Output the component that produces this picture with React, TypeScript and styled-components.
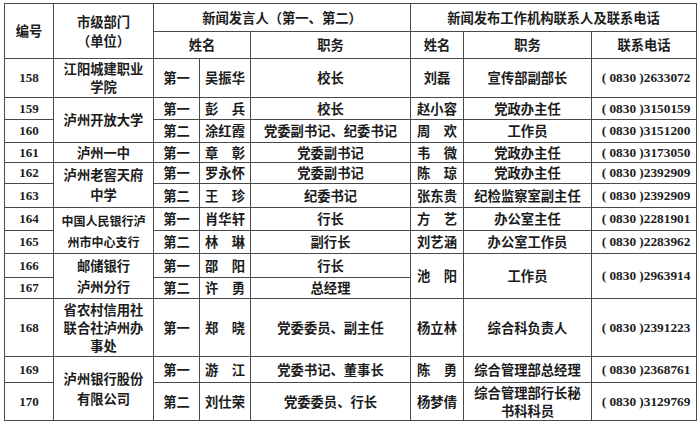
import React from 'react';
import styled, { createGlobalStyle } from 'styled-components';

const Global = createGlobalStyle`
  html, body { margin: 0; padding: 0; background: #fff; }
  body { width: 700px; height: 424px; overflow: hidden; }
`;

const Page = styled.div`
  padding: 3px 0 0 4px;
`;

const Table = styled.table`
  border-collapse: collapse;
  table-layout: fixed;
  width: 692px;
  font-family: "Noto Sans CJK SC", "Noto Sans", sans-serif;
  font-size: 13.3px;
  font-weight: 700;
  color: #1c1c1c;
`;

const Row = styled.tr<{ $h: number }>`
  height: ${(p) => p.$h}px;
`;

const Cell = styled.td<{ $lh?: number; $fs?: number }>`
  border: 1px solid #4a4a4a;
  padding: 0 4px;
  text-align: center;
  vertical-align: middle;
  line-height: ${(p) => p.$lh ?? 18}px;
  font-size: ${(p) => (p.$fs ? `${p.$fs}px` : 'inherit')};
  font-weight: 700;
  white-space: nowrap;
  overflow: hidden;
`;

const HeadCell = styled(Cell).attrs({ as: 'th' })``;

const SerifCell = styled(Cell)`
  font-family: "Liberation Serif", "Times New Roman", serif;
  font-size: 13px;
`;

const PhoneCell = styled(SerifCell)`
  font-size: 13.3px;
  padding: 0 2px 0 6px;
`;

type Contact = { name: string; role: string[]; phone: string; span?: number };
type Dept = { text: string[]; span: number; fs?: number; lh?: number };
type RowData = {
  no: string;
  h: number;
  dept?: Dept;
  ord: string;
  name: string;
  role: string;
  contact?: Contact;
};

const rows: RowData[] = [
  { no: '158', h: 39, dept: { text: ['江阳城建职业', '学院'], span: 1 }, ord: '第一', name: '吴振华', role: '校长', contact: { name: '刘磊', role: ['宣传部副部长'], phone: '2633072' } },
  { no: '159', h: 22, dept: { text: ['泸州开放大学'], span: 2 }, ord: '第一', name: '彭　兵', role: '校长', contact: { name: '赵小容', role: ['党政办主任'], phone: '3150159' } },
  { no: '160', h: 23, ord: '第二', name: '涂红霞', role: '党委副书记、纪委书记', contact: { name: '周　欢', role: ['工作员'], phone: '3151200' } },
  { no: '161', h: 20, dept: { text: ['泸州一中'], span: 1 }, ord: '第一', name: '章　彰', role: '党委副书记', contact: { name: '韦　微', role: ['党政办主任'], phone: '3173050' } },
  { no: '162', h: 21, dept: { text: ['泸州老窖天府', '中学'], span: 2, lh: 20 }, ord: '第一', name: '罗永怀', role: '党委副书记', contact: { name: '陈　琼', role: ['党政办主任'], phone: '2392909' } },
  { no: '163', h: 24, ord: '第二', name: '王　珍', role: '纪委书记', contact: { name: '张东贵', role: ['纪检监察室副主任'], phone: '2392909' } },
  { no: '164', h: 23, dept: { text: ['中国人民银行泸', '州市中心支行'], span: 2, fs: 12, lh: 21 }, ord: '第一', name: '肖华轩', role: '行长', contact: { name: '方　艺', role: ['办公室主任'], phone: '2281901' } },
  { no: '165', h: 23, ord: '第二', name: '林　琳', role: '副行长', contact: { name: '刘艺涵', role: ['办公室工作员'], phone: '2283962' } },
  { no: '166', h: 24, dept: { text: ['邮储银行', '泸州分行'], span: 2, lh: 21 }, ord: '第一', name: '邵　阳', role: '行长', contact: { name: '池　阳', role: ['工作员'], phone: '2963914', span: 2 } },
  { no: '167', h: 21, ord: '第二', name: '许　勇', role: '总经理' },
  { no: '168', h: 58, dept: { text: ['省农村信用社', '联合社泸州办', '事处'], span: 1 }, ord: '第一', name: '郑　晓', role: '党委委员、副主任', contact: { name: '杨立林', role: ['综合科负责人'], phone: '2391223' } },
  { no: '169', h: 26, dept: { text: ['泸州银行股份', '有限公司'], span: 2, lh: 20 }, ord: '第一', name: '游　江', role: '党委书记、董事长', contact: { name: '陈　勇', role: ['综合管理部总经理'], phone: '2368761' } },
  { no: '170', h: 38, ord: '第二', name: '刘仕荣', role: '党委委员、行长', contact: { name: '杨梦倩', role: ['综合管理部行长秘', '书科科员'], phone: '3129769' } },
];

const Lines: React.FC<{ lines: string[] }> = ({ lines }) => (
  <>
    {lines.map((l, i) => (
      <React.Fragment key={i}>
        {i > 0 && <br />}
        {l}
      </React.Fragment>
    ))}
  </>
);

export default function App() {
  return (
    <Page>
      <Global />
      <Table>
        <colgroup>
          <col style={{ width: 49 }} />
          <col style={{ width: 100 }} />
          <col style={{ width: 46 }} />
          <col style={{ width: 51 }} />
          <col style={{ width: 160 }} />
          <col style={{ width: 53 }} />
          <col style={{ width: 128 }} />
          <col style={{ width: 105 }} />
        </colgroup>
        <thead>
          <Row $h={28}>
            <HeadCell rowSpan={2}>编号</HeadCell>
            <HeadCell rowSpan={2} $lh={19}>
              市级部门
              <br />
              （单位）
            </HeadCell>
            <HeadCell colSpan={3}>新闻发言人（第一、第二）</HeadCell>
            <HeadCell colSpan={3}>新闻发布工作机构联系人及联系电话</HeadCell>
          </Row>
          <Row $h={27}>
            <HeadCell colSpan={2}>姓名</HeadCell>
            <HeadCell>职务</HeadCell>
            <HeadCell>姓名</HeadCell>
            <HeadCell>职务</HeadCell>
            <HeadCell>联系电话</HeadCell>
          </Row>
        </thead>
        <tbody>
          {rows.map((r) => (
            <Row key={r.no} $h={r.h}>
              <SerifCell>{r.no}</SerifCell>
              {r.dept && (
                <Cell rowSpan={r.dept.span} $fs={r.dept.fs} $lh={r.dept.lh}>
                  <Lines lines={r.dept.text} />
                </Cell>
              )}
              <Cell>{r.ord}</Cell>
              <Cell>{r.name}</Cell>
              <Cell>{r.role}</Cell>
              {r.contact && (
                <>
                  <Cell rowSpan={r.contact.span ?? 1}>{r.contact.name}</Cell>
                  <Cell rowSpan={r.contact.span ?? 1}>
                    <Lines lines={r.contact.role} />
                  </Cell>
                  <PhoneCell rowSpan={r.contact.span ?? 1}>( 0830 ){r.contact.phone}</PhoneCell>
                </>
              )}
            </Row>
          ))}
        </tbody>
      </Table>
    </Page>
  );
}
